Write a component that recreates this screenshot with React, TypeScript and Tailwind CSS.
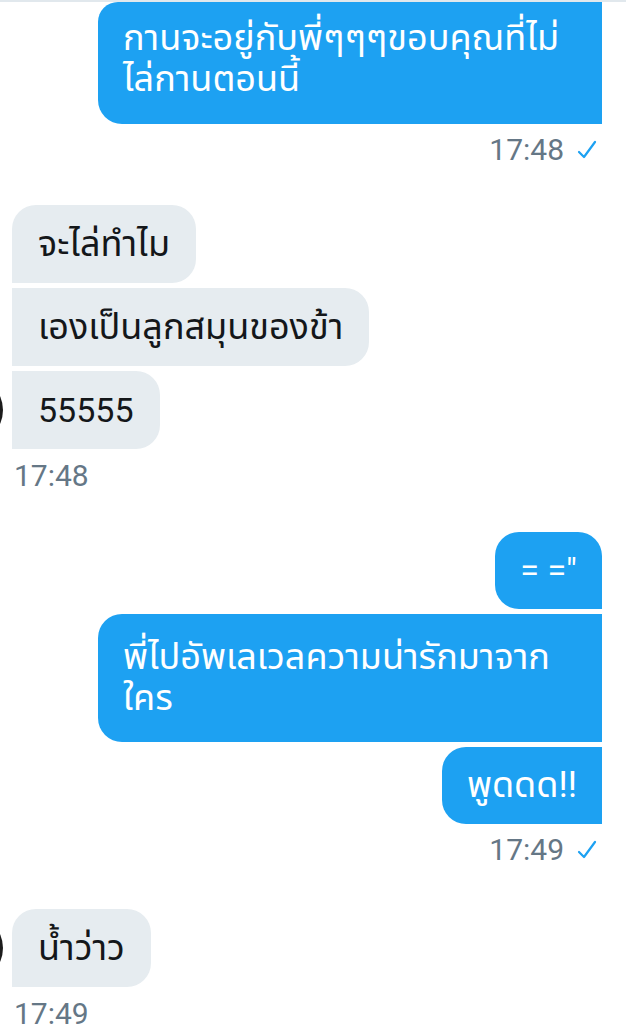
import React from 'react';

const font = { fontFamily: 'Roboto, "Noto Sans Thai", "Noto Sans", sans-serif' };

function Check() {
  return (
    <svg width="22" height="22" viewBox="0 0 22 22" className="ml-[12px]">
      <polyline points="3,13 8,18 19,3" fill="none" stroke="#1da1f2" strokeWidth="2.2" strokeLinecap="round" strokeLinejoin="round" />
    </svg>
  );
}

function Avatar() {
  return <div className="-ml-[77px] mr-[9px] h-[68px] w-[68px] shrink-0 self-center rounded-full bg-[#1c1c1c]" />;
}

function Sent({ children, className }: { children: React.ReactNode; className: string }) {
  return (
    <div className="flex justify-end pr-[24px]">
      <div className={`bg-[#1da1f2] px-[25px] leading-[41px] text-white ${className}`}>{children}</div>
    </div>
  );
}

function Received({ children, className, avatar }: { children: React.ReactNode; className: string; avatar?: boolean }) {
  return (
    <div className="flex pl-[12px]">
      {avatar && <Avatar />}
      <div className={`bg-[#e6ecf0] px-[26px] py-[18px] leading-[42px] text-[#14171a] ${className}`}>{children}</div>
    </div>
  );
}

function SentTime({ time }: { time: string }) {
  return (
    <div className="mt-[8px] flex items-center justify-end pr-[28px] text-[30px] leading-[36px] text-[#657786]">
      {time}
      <Check />
    </div>
  );
}

function ReceivedTime({ time }: { time: string }) {
  return <div className="mt-[9px] pl-[14px] text-[30px] leading-[36px] text-[#657786]">{time}</div>;
}

export default function App() {
  return (
    <div className="h-[1036px] w-[626px] overflow-hidden bg-white" style={font}>
      <div className="h-[2px] bg-[#e1e8ed]" />
      <Sent className="w-[504px] rounded-bl-[24px] rounded-tl-[20px] pb-[24px] pt-[16px] text-[36px]">
        กานจะอยู่กับพี่ๆๆๆขอบคุณที่ไม่
        <br />
        ไล่กานตอนนี้
      </Sent>
      <SentTime time="17:48" />

      <div className="mt-[37px] flex flex-col gap-[5px]">
        <Received className="rounded-r-[24px] rounded-tl-[24px] text-[36px]">จะไล่ทำไม</Received>
        <Received className="rounded-r-[24px] text-[36px]">เองเป็นลูกสมุนของข้า</Received>
        <Received className="rounded-r-[24px] text-[34px]" avatar>
          55555
        </Received>
      </div>
      <ReceivedTime time="17:48" />

      <div className="mt-[38px] flex flex-col gap-[5px]">
        <Sent className="rounded-l-[24px] rounded-tr-[24px] py-[18px] text-[34px]">= ="</Sent>
        <Sent className="w-[504px] rounded-l-[24px] py-[23px] text-[36px]">
          พี่ไปอัพเลเวลความน่ารักมาจาก
          <br />
          ใคร
        </Sent>
        <Sent className="rounded-l-[24px] py-[18px] text-[36px]">พูดดด!!</Sent>
      </div>
      <SentTime time="17:49" />

      <div className="mt-[41px] flex flex-col gap-[5px]">
        <Received className="rounded-r-[24px] rounded-tl-[24px] text-[36px]" avatar>
          น้ำว่าว
        </Received>
      </div>
      <ReceivedTime time="17:49" />
    </div>
  );
}
